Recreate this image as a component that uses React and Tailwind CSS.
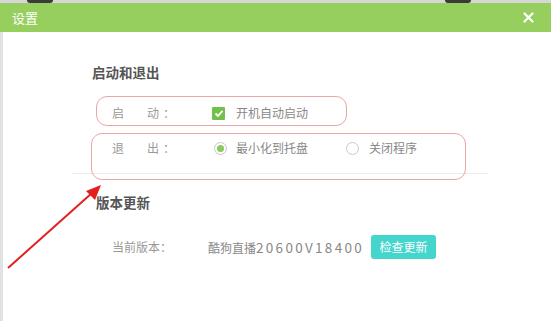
import React from 'react';

const FONT = { fontFamily: '"Microsoft YaHei", "Noto Sans CJK SC", "Noto Sans", sans-serif' };

function Label({ a, b }) {
  return (
    <div className="flex w-[100px] text-[12px] text-[#999]">
      <span className="w-[35px]">{a}</span>
      <span>{b}</span>
      <span className="ml-[4px]">：</span>
    </div>
  );
}

function Radio({ checked }) {
  return (
    <span className="flex h-[13px] w-[13px] items-center justify-center rounded-full border border-[#c8c8c8] bg-white">
      {checked && <span className="h-[7px] w-[7px] rounded-full bg-[#8bc95a]" />}
    </span>
  );
}

export default function App() {
  return (
    <div className="relative h-[321px] w-[551px] overflow-hidden bg-white" style={FONT}>
      {/* strip of whatever sits behind the dialog */}
      <div className="flex h-[3px] bg-[#d6d6d6]">
        <div className="ml-[27px] h-[3px] w-[26px] rounded-b bg-[#3a3a3a]" />
        <div className="ml-[392px] h-[3px] w-[26px] rounded-b bg-[#3a3a3a]" />
      </div>

      <div className="flex h-[29px] items-center justify-between bg-[#96cf5e] pl-[12px] pr-[17px]">
        <span className="text-[13px] text-white">设置</span>
        <svg width="11" height="11" viewBox="0 0 11 11">
          <path d="M1.5 1.5 L9.5 9.5 M9.5 1.5 L1.5 9.5" stroke="#fff" strokeWidth="2.2" strokeLinecap="round" />
        </svg>
      </div>

      <div className="flex h-[289px] flex-col border-l-[3px] border-[#e2e2e2]">
        <div className="ml-[89px] mt-[30px] h-[20px] text-[13.5px] font-bold leading-[20px] text-[#555]">启动和退出</div>

        <div className="ml-[109px] mt-[21px] flex h-[20px] items-center">
          <Label a="启" b="动" />
          <span className="flex h-[13px] w-[13px] items-center justify-center rounded-[1px] bg-[#72c04c]">
            <svg width="10" height="9" viewBox="0 0 10 9">
              <path d="M1.5 4.5 L4 7 L8.5 1.8" fill="none" stroke="#fff" strokeWidth="1.8" />
            </svg>
          </span>
          <span className="ml-[11px] text-[12px] text-[#888]">开机自动启动</span>
        </div>

        <div className="ml-[109px] mt-[15px] flex h-[20px] items-center">
          <Label a="退" b="出" />
          <span className="ml-[2px]">
            <Radio checked />
          </span>
          <span className="ml-[9px] text-[12px] text-[#888]">最小化到托盘</span>
          <span className="ml-[38px]">
            <Radio />
          </span>
          <span className="ml-[10px] text-[12px] text-[#888]">关闭程序</span>
        </div>

        <div className="ml-[69px] mt-[15px] h-px w-[416px] bg-[#ececec]" />

        <div className="ml-[93px] mt-[18px] h-[20px] text-[13.5px] font-bold leading-[20px] text-[#555]">版本更新</div>

        <div className="ml-[109px] mt-[23px] flex h-[24px] items-center text-[12px] text-[#999]">
          <span className="w-[96px]">当前版本：</span>
          <span className="flex w-[163px] items-baseline text-[#888]">
            <span>酷狗直播</span>
            <span className="text-[13.5px] tracking-[2.3px]">20600V18400</span>
          </span>
          <button className="h-[24px] w-[65px] rounded-[3px] bg-[#44d5cc] text-[12px] text-white">检查更新</button>
        </div>
      </div>

      {/* annotation overlays */}
      <div className="absolute left-[96px] top-[96px] h-[30px] w-[251px] rounded-[11px] border-[1.5px] border-[#eba6a6]" />
      <div className="absolute left-[91px] top-[133px] h-[47px] w-[375px] rounded-[11px] border-[1.5px] border-[#eba6a6]" />
      <svg className="absolute left-0 top-0" width="551" height="321">
        <line x1="8" y1="268" x2="92" y2="193" stroke="#e2201f" strokeWidth="2" />
        <polygon points="101,185 86,191 95,200" fill="#e2201f" />
      </svg>
    </div>
  );
}
